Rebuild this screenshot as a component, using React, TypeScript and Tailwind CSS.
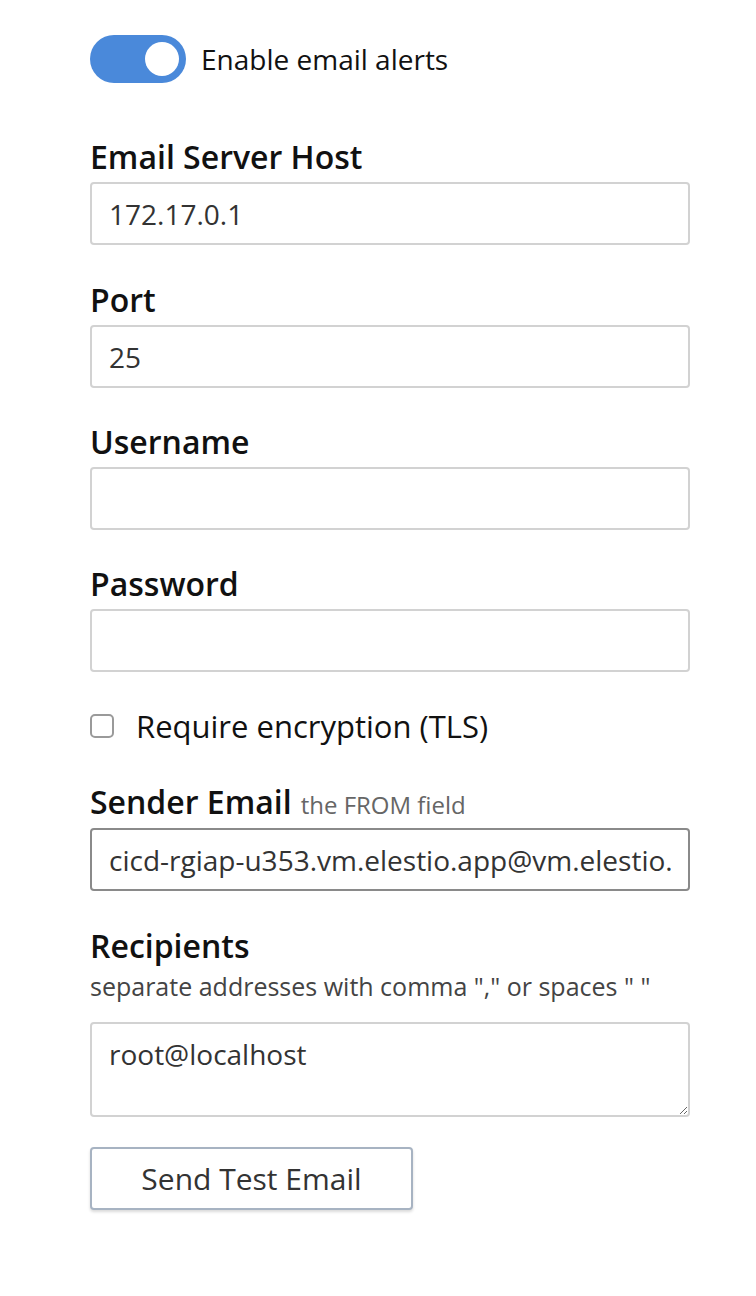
import React, { useState } from 'react';

const font = { fontFamily: '"Open Sans", "Noto Sans", sans-serif' };

const Label: React.FC<{ text: string }> = ({ text }) => (
  <div className="text-[32px] leading-[40px] font-semibold text-[#111] mb-[5px]">{text}</div>
);

const Input: React.FC<{ value?: string; dark?: boolean }> = ({ value = '', dark }) => (
  <input
    readOnly
    value={value}
    className={`block w-[600px] h-[63px] px-[17px] rounded-[4px] border-2 text-[28px] text-[#333] outline-none ${
      dark ? 'border-[#8a8a8a]' : 'border-[#d2d2d2]'
    }`}
  />
);

export default function App() {
  const [on, setOn] = useState(true);
  return (
    <div className="min-h-[1296px] bg-white pl-[90px] pt-[35px]" style={font}>
      <div className="flex items-center h-[48px]">
        <button
          onClick={() => setOn(!on)}
          className={`w-[96px] h-[48px] rounded-full flex items-center px-[7px] ${
            on ? 'bg-[#4a89da] justify-end' : 'bg-[#ccc] justify-start'
          }`}
        >
          <span className="w-[34px] h-[34px] rounded-full bg-white" />
        </button>
        <span className="ml-[15px] text-[28px] text-[#111]">Enable email alerts</span>
      </div>

      <div className="mt-[54px]">
        <Label text="Email Server Host" />
        <Input value="172.17.0.1" />
      </div>
      <div className="mt-[35px]">
        <Label text="Port" />
        <Input value="25" />
      </div>
      <div className="mt-[34px]">
        <Label text="Username" />
        <Input />
      </div>
      <div className="mt-[34px]">
        <Label text="Password" />
        <Input />
      </div>

      <label className="mt-[35px] flex items-center h-[38px]">
        <span className="w-[24px] h-[24px] rounded-[5px] border-2 border-[#9a9a9a] bg-white" />
        <span className="ml-[22px] text-[31px] text-[#111]">Require encryption (TLS)</span>
      </label>

      <div className="mt-[37px]">
        <div className="text-[32px] leading-[40px] font-semibold text-[#111] mb-[3px]">
          Sender Email
          <span className="ml-[9px] text-[24px] font-normal text-[#666]">the FROM field</span>
        </div>
        <Input value="cicd-rgiap-u353.vm.elestio.app@vm.elestio.app" dark />
      </div>

      <div className="mt-[35px]">
        <div className="text-[32px] leading-[40px] font-semibold text-[#111]">Recipients</div>
        <div className="mt-[5px] text-[25px] leading-[30px] text-[#444]">
          separate addresses with comma "," or spaces " "
        </div>
        <textarea
          readOnly
          value="root@localhost"
          className="mt-[21px] block w-[600px] h-[95px] px-[17px] py-[9px] rounded-[4px] border-2 border-[#d2d2d2] text-[28px] text-[#333] outline-none"
        />
      </div>

      <button className="mt-[30px] block w-[323px] h-[63px] rounded-[4px] border-2 border-[#a7b3c2] bg-white text-[30px] text-[#333] shadow-[0_2px_3px_rgba(0,0,0,0.15)]">
        Send Test Email
      </button>
    </div>
  );
}
